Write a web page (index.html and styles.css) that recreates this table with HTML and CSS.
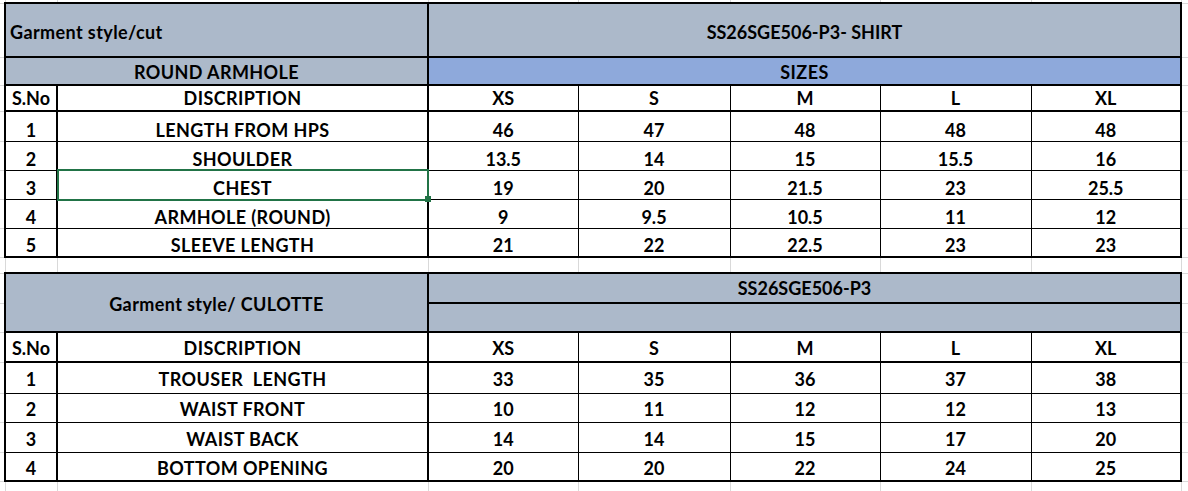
FILE: index.html
```html
<!DOCTYPE html>
<html lang="en">
<head>
<meta charset="utf-8">
<title>Measurement chart</title>
<link rel="stylesheet" href="styles.css">
</head>
<body>
<table class="sheet">
  <colgroup>
    <col class="col-a"><col class="col-b"><col class="col-c"><col class="col-d"><col class="col-e"><col class="col-f"><col class="col-g"><col class="col-h"><col class="col-i">
  </colgroup>
  <tbody>
    <tr class="r-top">
      <td class="g ea"></td><td class="g"></td><td class="g"></td><td class="g"></td><td class="g"></td><td class="g"></td><td class="g"></td><td class="g"></td><td class="g ei"></td>
    </tr>

    <!-- Table 1 : shirt -->
    <tr class="r-h1">
      <td class="g ea"></td>
      <td class="c hd title tx k-t k-l k-b k-r" colspan="2">Garment style/cut</td>
      <td class="c hd mid1 k-t k-l k-b k-r" colspan="5">SS26SGE506-P3- SHIRT</td>
      <td class="g ei"></td>
    </tr>
    <tr class="r-h2">
      <td class="g ea"></td>
      <td class="c hd bot tx k-t k-l k-b k-r" colspan="2">ROUND ARMHOLE</td>
      <td class="c blue bot tx k-t k-l k-b k-r" colspan="5">SIZES</td>
      <td class="g ei"></td>
    </tr>
    <tr class="r-h3">
      <td class="g ea"></td>
      <td class="c bot k-l k-r k-b">S.No</td>
      <td class="c bot tx k-r k-b">DISCRIPTION</td>
      <td class="c bot k-b">XS</td><td class="c bot k-b">S</td><td class="c bot k-b">M</td><td class="c bot k-b">L</td><td class="c bot k-b k-r">XL</td>
      <td class="g ei"></td>
    </tr>
    <tr class="r-d1">
      <td class="g ea"></td>
      <td class="c dat k-l k-r">1</td><td class="c dat tx k-r">LENGTH FROM HPS</td>
      <td class="c dat">46</td><td class="c dat">47</td><td class="c dat">48</td><td class="c dat">48</td><td class="c dat k-r">48</td>
      <td class="g ei"></td>
    </tr>
    <tr class="r-d">
      <td class="g ea"></td>
      <td class="c dat k-l k-r">2</td><td class="c dat tx k-r">SHOULDER</td>
      <td class="c dat">13.5</td><td class="c dat">14</td><td class="c dat">15</td><td class="c dat">15.5</td><td class="c dat k-r">16</td>
      <td class="g ei"></td>
    </tr>
    <tr class="r-d">
      <td class="g ea"></td>
      <td class="c dat k-l k-r">3</td><td class="c dat tx k-r sel">CHEST</td>
      <td class="c dat">19</td><td class="c dat">20</td><td class="c dat">21.5</td><td class="c dat">23</td><td class="c dat k-r">25.5</td>
      <td class="g ei"></td>
    </tr>
    <tr class="r-d">
      <td class="g ea"></td>
      <td class="c dat k-l k-r">4</td><td class="c dat tx k-r">ARMHOLE (ROUND)</td>
      <td class="c dat">9</td><td class="c dat">9.5</td><td class="c dat">10.5</td><td class="c dat">11</td><td class="c dat k-r">12</td>
      <td class="g ei"></td>
    </tr>
    <tr class="r-d">
      <td class="g ea"></td>
      <td class="c dat k-l k-r k-b">5</td><td class="c dat tx k-r k-b">SLEEVE LENGTH</td>
      <td class="c dat k-b">21</td><td class="c dat k-b">22</td><td class="c dat k-b">22.5</td><td class="c dat k-b">23</td><td class="c dat k-r k-b">23</td>
      <td class="g ei"></td>
    </tr>

    <tr class="r-gap">
      <td class="g ea"></td><td class="g"></td><td class="g"></td><td class="g"></td><td class="g"></td><td class="g"></td><td class="g"></td><td class="g"></td><td class="g ei"></td>
    </tr>

    <!-- Table 2 : culotte -->
    <tr class="r-t2a">
      <td class="g ea"></td>
      <td class="c hd mid2 tx k-t k-l k-b k-r" colspan="2" rowspan="2">Garment style/ CULOTTE</td>
      <td class="c hd mid k-t k-l k-b k-r" colspan="5">SS26SGE506-P3</td>
      <td class="g ei"></td>
    </tr>
    <tr class="r-t2b">
      <td class="g ea"></td>
      <td class="c hd k-t k-l k-b k-r" colspan="5"></td>
      <td class="g ei"></td>
    </tr>
    <tr class="r-t2c">
      <td class="g ea"></td>
      <td class="c bot3 k-l k-r k-b">S.No</td>
      <td class="c bot3 tx k-r k-b">DISCRIPTION</td>
      <td class="c bot3 k-b">XS</td><td class="c bot3 k-b">S</td><td class="c bot3 k-b">M</td><td class="c bot3 k-b">L</td><td class="c bot3 k-b k-r">XL</td>
      <td class="g ei"></td>
    </tr>
    <tr class="r-e1">
      <td class="g ea"></td>
      <td class="c bot2 k-l k-r">1</td><td class="c bot2 tx k-r">TROUSER&nbsp; LENGTH</td>
      <td class="c bot2">33</td><td class="c bot2">35</td><td class="c bot2">36</td><td class="c bot2">37</td><td class="c bot2 k-r">38</td>
      <td class="g ei"></td>
    </tr>
    <tr class="r-e2">
      <td class="g ea"></td>
      <td class="c bot4 k-l k-r">2</td><td class="c bot4 tx k-r">WAIST FRONT</td>
      <td class="c bot4">10</td><td class="c bot4">11</td><td class="c bot4">12</td><td class="c bot4">12</td><td class="c bot4 k-r">13</td>
      <td class="g ei"></td>
    </tr>
    <tr class="r-e3">
      <td class="g ea"></td>
      <td class="c bot4 k-l k-r">3</td><td class="c bot4 tx k-r">WAIST BACK</td>
      <td class="c bot4">14</td><td class="c bot4">14</td><td class="c bot4">15</td><td class="c bot4">17</td><td class="c bot4 k-r">20</td>
      <td class="g ei"></td>
    </tr>
    <tr class="r-e4">
      <td class="g ea"></td>
      <td class="c bot5 k-l k-r k-b">4</td><td class="c bot5 tx k-r k-b">BOTTOM OPENING</td>
      <td class="c bot5 k-b">20</td><td class="c bot5 k-b">20</td><td class="c bot5 k-b">22</td><td class="c bot5 k-b">24</td><td class="c bot5 k-r k-b">25</td>
      <td class="g ei"></td>
    </tr>

    <tr class="r-end">
      <td class="g ea"></td><td class="g"></td><td class="g"></td><td class="g"></td><td class="g"></td><td class="g"></td><td class="g"></td><td class="g"></td><td class="g ei"></td>
    </tr>
  </tbody>
</table>
</body>
</html>
```

FILE: styles.css
```css
html, body {
  margin: 0;
  padding: 0;
  background: #ffffff;
  overflow: hidden;
}

.sheet {
  width: 1188px;
  table-layout: fixed;
  border-collapse: collapse;
  font-family: Lato, "Liberation Sans", Arial, sans-serif;
  font-weight: 700;
  font-size: 18px;
  line-height: 20px;
  color: #000000;
}

.col-a { width: 5px; }
.col-b { width: 52px; }
.col-c { width: 371px; }
.col-d { width: 150px; }
.col-e { width: 152px; }
.col-f { width: 150px; }
.col-g { width: 151px; }
.col-h { width: 150px; }
.col-i { width: 7px; }

.sheet td {
  padding: 0;
  text-align: center;
  white-space: nowrap;
  overflow: visible;
}

.sheet .tx { letter-spacing: 0.4px; }

/* excel gridline cells */
.sheet .g {
  border: 1px solid #d9d9d9;
}
.sheet .ea { border-left: 0; }
.sheet .ei { border-right: 0; }
.sheet .r-top td { border-top: 0; }
.sheet .r-end td { border-bottom: 0; }

/* table cells */
.sheet .c {
  border: 1px solid #000000;
}
.sheet .k-t { border-top-width: 2px; }
.sheet .k-b { border-bottom-width: 2px; }
.sheet .k-l { border-left-width: 2px; }
.sheet .k-r { border-right-width: 2px; }

.hd { background: #acb9ca; }
.blue { background: #8ea9db; }

.sheet .mid { vertical-align: middle; }
.sheet .mid1 {
  vertical-align: middle;
  padding-top: 4px;
}
.sheet .mid2 {
  vertical-align: middle;
  padding-top: 2px;
}
.sheet .title {
  text-align: left;
  padding-left: 4px;
  padding-top: 3px;
  vertical-align: middle;
}
.sheet .bot {
  vertical-align: bottom;
  padding-bottom: 2px;
}
.sheet .dat {
  vertical-align: bottom;
  padding-bottom: 1px;
}
.sheet .bot2 {
  vertical-align: bottom;
  padding-bottom: 4px;
}
.sheet .bot3 {
  vertical-align: bottom;
  padding-bottom: 3px;
}
.sheet .bot4 {
  vertical-align: bottom;
  padding-bottom: 3px;
}
.sheet .bot5 {
  vertical-align: bottom;
  padding-bottom: 2px;
}

/* row heights */
.r-top { height: 3px; }
.r-h1 { height: 54px; }
.r-h2 { height: 28px; }
.r-h3 { height: 26px; }
.r-d1 { height: 30px; }
.r-d { height: 29px; }
.r-gap { height: 16px; }
.r-t2a { height: 30px; }
.r-t2b { height: 29px; }
.r-t2c { height: 30px; }
.r-e1 { height: 31px; }
.r-e2 { height: 29px; }
.r-e3 { height: 30px; }
.r-e4 { height: 29px; }
.r-end { height: 10px; }

/* active cell selection */
.sheet .sel {
  position: relative;
}
.sel::after {
  content: "";
  position: absolute;
  top: -2px;
  left: -1px;
  right: -2px;
  bottom: -2px;
  border: 2px solid #217346;
  pointer-events: none;
}
.sel::before {
  content: "";
  position: absolute;
  right: -4px;
  bottom: -3px;
  width: 6px;
  height: 6px;
  background: #217346;
  z-index: 1;
}
```
